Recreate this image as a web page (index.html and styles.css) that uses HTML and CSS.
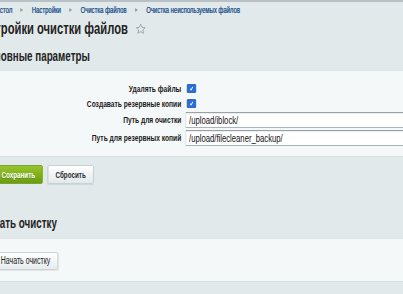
FILE: index.html
```html
<!DOCTYPE html>
<html lang="ru">

<head>
    <meta charset="UTF-8">
    <title>Настройки очистки файлов</title>
    <link rel="stylesheet" href="styles.css">
</head>

<body>
    <div class="page">
        <div class="topline"></div>
        <div class="content">
            <div class="crumbs">
                <a class="crumb">Рабочий стол</a>
                <span class="crumb-sep"></span>
                <a class="crumb">Настройки</a>
                <span class="crumb-sep"></span>
                <a class="crumb">Очистка файлов</a>
                <span class="crumb-sep"></span>
                <a class="crumb">Очистка неиспользуемых файлов</a>
            </div>

            <h1 class="title">Настройки очистки файлов
                <svg class="star" viewBox="0 0 24 24" preserveAspectRatio="none">
                    <path d="M12 2.5l2.9 6.2 6.6.7-5 4.5 1.4 6.6L12 17.2l-5.9 3.3 1.4-6.6-5-4.5 6.6-.7z"
                        fill="none" stroke="#9aa6ac" stroke-width="2" stroke-linejoin="round"/>
                </svg>
            </h1>

            <h2 class="section-title">Основные параметры</h2>
            <div class="panel">
                <div class="form-grid">
                    <label class="form-label">Удалять файлы</label>
                    <div class="form-row"><span class="check"><svg viewBox="0 0 10 10"><path d="M2.2 5.2l2 2 3.6-4.4" fill="none" stroke="#fff" stroke-width="1.6"/></svg></span></div>

                    <label class="form-label">Создавать резервные копии</label>
                    <div class="form-row"><span class="check"><svg viewBox="0 0 10 10"><path d="M2.2 5.2l2 2 3.6-4.4" fill="none" stroke="#fff" stroke-width="1.6"/></svg></span></div>

                    <label class="form-label form-label-input">Путь для очистки</label>
                    <div class="form-row form-row-input"><input type="text" class="form-input" value="/upload/iblock/"></div>

                    <label class="form-label form-label-input">Путь для резервных копий</label>
                    <div class="form-row form-row-input"><input type="text" class="form-input" value="/upload/filecleaner_backup/"></div>
                </div>
            </div>

            <div class="actions">
                <button class="btn btn-save">Сохранить</button>
                <button class="btn btn-reset">Сбросить</button>
            </div>

            <h2 class="section-title section-title-2">Начать очистку</h2>
            <div class="panel panel-small">
                <button class="btn btn-start">Начать очистку</button>
            </div>
        </div>
    </div>
</body>

</html>
```

FILE: styles.css
```css
* {
    margin: 0;
    padding: 0;
    box-sizing: border-box;
}

html,
body {
    height: 100%;
    overflow: hidden;
    background: #e2e9eb;
    font-family: 'Liberation Sans', Arial, sans-serif;
    color: #222;
}

.page {
    width: 576px;
    transform: scaleX(0.7);
    transform-origin: 0 0;
}

.topline {
    height: 2px;
    background: #b8c1c5;
}

.content {
    margin-left: -36px;
}

.crumbs {
    display: flex;
    align-items: center;
    height: 12px;
    margin-top: 2px;
    font-size: 8.5px;
    white-space: nowrap;
}

.crumb {
    color: #2b5a92;
    text-shadow: 0.3px 0 0 #2b5a92;
}

.crumb-sep {
    width: 0;
    height: 0;
    margin: 0 12px;
    border-top: 2.5px solid transparent;
    border-bottom: 2.5px solid transparent;
    border-left: 4px solid #8f9ca2;
}

.title {
    display: flex;
    align-items: center;
    height: 20px;
    margin-top: 3px;
    font-size: 16px;
    font-weight: bold;
    white-space: nowrap;
}

.star {
    width: 16px;
    height: 12px;
    margin-left: 10px;
}

.section-title {
    height: 16px;
    margin-top: 9px;
    margin-bottom: 6px;
    padding-left: 10px;
    font-size: 14px;
    line-height: 16px;
    font-weight: bold;
}

.section-title-2 {
    margin-top: 31px;
    margin-bottom: 7px;
}

.panel {
    margin-left: -20px;
    width: 700px;
    background: #f5f8f9;
    border-top: 1px solid #dde5e8;
    border-bottom: 1px solid #d6dfe2;
    padding: 10px 0 9px;
}

.form-grid {
    display: grid;
    grid-template-columns: 315px 1fr;
    column-gap: 8px;
}

.form-label {
    height: 15px;
    line-height: 15px;
    text-align: right;
    font-size: 9.5px;
    font-weight: bold;
    color: #1a1a1a;
    white-space: nowrap;
}

.form-label-input {
    height: 18px;
    line-height: 18px;
}

.form-row {
    display: flex;
    align-items: center;
    height: 15px;
}

.form-row-input {
    height: 18px;
}

.check {
    display: block;
    width: 13px;
    height: 9px;
    border-radius: 1px;
    background: #2a6fd6;
    border: 1px solid #1f5cb8;
}

.check svg {
    display: block;
    width: 100%;
    height: 100%;
}

.form-input {
    width: 400px;
    height: 16px;
    margin-left: -2px;
    padding: 0 4px;
    font-family: 'Liberation Sans', Arial, sans-serif;
    font-size: 11px;
    color: #111;
    background: #fff;
    border: 1px solid #aab5ba;
    border-top-color: #97a3a9;
    border-radius: 1px;
    box-shadow: inset 0 1px 1px rgba(0, 0, 0, 0.08);
}

.actions {
    display: flex;
    gap: 7px;
    margin-top: 8px;
    padding-left: 24px;
}

.btn {
    height: 19px;
    padding: 0 13px;
    font-family: 'Liberation Sans', Arial, sans-serif;
    font-size: 9px;
    font-weight: bold;
    border-radius: 2px;
    cursor: pointer;
}

.btn-save {
    padding-right: 10px;
    color: #fff;
    background: linear-gradient(#96c62a, #6a9c10);
    border: 1px solid #68961a;
    text-shadow: 0 1px 0 rgba(0, 0, 0, 0.2);
}

.btn-reset {
    padding: 0 10px;
    color: #2a2a2a;
    background: linear-gradient(#ffffff, #e3e9eb);
    border: 1px solid #c3ccd0;
    box-shadow: 0 1px 1px rgba(0, 0, 0, 0.08);
}

.panel-small {
    height: 44px;
    padding: 11px 0 0 46px;
}

.btn-start {
    height: 18px;
    padding: 0 10px;
    font-size: 10px;
    font-weight: normal;
    color: #222;
    background: linear-gradient(#ffffff, #e6ecee);
    border: 1px solid #c3ccd0;
    box-shadow: 0 1px 1px rgba(0, 0, 0, 0.08);
}
```
